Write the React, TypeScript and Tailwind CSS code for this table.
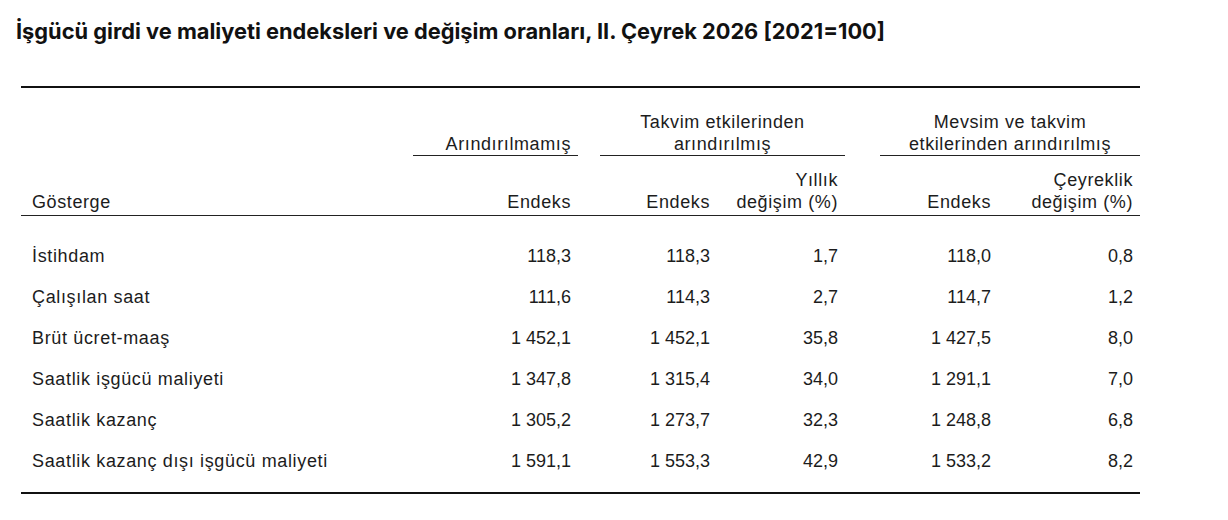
import React from "react";

const rows: [string, string, string, string, string, string][] = [
  ["İstihdam", "118,3", "118,3", "1,7", "118,0", "0,8"],
  ["Çalışılan saat", "111,6", "114,3", "2,7", "114,7", "1,2"],
  ["Brüt ücret-maaş", "1 452,1", "1 452,1", "35,8", "1 427,5", "8,0"],
  ["Saatlik işgücü maliyeti", "1 347,8", "1 315,4", "34,0", "1 291,1", "7,0"],
  ["Saatlik kazanç", "1 305,2", "1 273,7", "32,3", "1 248,8", "6,8"],
  ["Saatlik kazanç dışı işgücü maliyeti", "1 591,1", "1 553,3", "42,9", "1 533,2", "8,2"],
];

const grid =
  "grid grid-cols-[392px_165px_22px_117px_128px_35px_118px_142px]";

export default function App() {
  return (
    <div className="w-[1228px] h-[520px] bg-white overflow-hidden">
      <h1 className="pl-[16px] pt-[17px] text-[21.8px] leading-[28px] font-bold text-[#111111] [font-family:Inter,'Noto_Sans',sans-serif]">
        İşgücü girdi ve maliyeti endeksleri ve değişim oranları, II. Çeyrek 2026 [2021=100]
      </h1>
      <div className="ml-[21px] mt-[41px] w-[1119px] border-t-2 border-b-2 border-[#111111] text-[18px] leading-[22px] text-[#1c1c1c] [font-family:'Liberation_Sans',Arial,sans-serif]">
        {/* group header */}
        <div className={`${grid} pt-[23px]`}>
          <div />
          <div className="flex flex-col justify-end">
            <div className="pr-[7px] text-right tracking-[0.6px]">Arındırılmamış</div>
            <div className="border-b border-[#222222]" />
          </div>
          <div />
          <div className="col-span-2 flex flex-col justify-end">
            <div className="text-center tracking-[0.6px]">
              Takvim etkilerinden
              <br />
              arındırılmış
            </div>
            <div className="border-b border-[#222222]" />
          </div>
          <div />
          <div className="col-span-2 flex flex-col justify-end">
            <div className="text-center tracking-[0.6px]">
              Mevsim ve takvim
              <br />
              etkilerinden arındırılmış
            </div>
            <div className="border-b border-[#222222]" />
          </div>
        </div>
        {/* sub header */}
        <div className={`${grid} pt-[13px] pb-[2px] border-b border-[#222222] tracking-[0.6px]`}>
          <div className="pl-[11px] self-end">Gösterge</div>
          <div className="pr-[7px] text-right self-end">Endeks</div>
          <div />
          <div className="pr-[7px] text-right self-end">Endeks</div>
          <div className="pr-[7px] text-right self-end">
            Yıllık
            <br />
            değişim (%)
          </div>
          <div />
          <div className="pr-[7px] text-right self-end">Endeks</div>
          <div className="pr-[7px] text-right self-end">
            Çeyreklik
            <br />
            değişim (%)
          </div>
        </div>
        {/* body */}
        <div className="pt-[19px] pb-[11px]">
          {rows.map((r) => (
            <div key={r[0]} className={`${grid} h-[41px] items-center`}>
              <div className="pl-[11px] tracking-[0.65px]">{r[0]}</div>
              <div className="pr-[7px] text-right">{r[1]}</div>
              <div />
              <div className="pr-[7px] text-right">{r[2]}</div>
              <div className="pr-[7px] text-right">{r[3]}</div>
              <div />
              <div className="pr-[7px] text-right">{r[4]}</div>
              <div className="pr-[7px] text-right">{r[5]}</div>
            </div>
          ))}
        </div>
      </div>
    </div>
  );
}
